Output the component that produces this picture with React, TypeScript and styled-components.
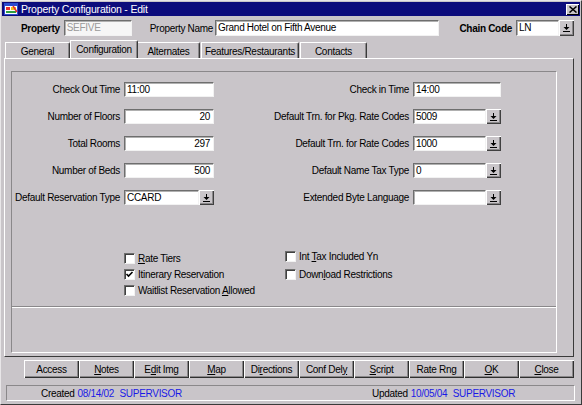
import React from 'react';
import styled, { createGlobalStyle } from 'styled-components';

const GlobalStyle = createGlobalStyle`
  html, body {
    margin: 0;
    padding: 0;
  }
  body {
    font-family: "Liberation Sans", Arial, sans-serif;
    font-size: 10px;
    letter-spacing: -0.3px;
    color: #000;
    background: #c9c5c9;
  }
`;

const BG = '#c9c5c9';

const Window = styled.div`
  width: 582px;
  height: 405px;
  box-sizing: border-box;
  background: ${BG};
  border: 1px solid;
  border-color: #e8e6e8 #3a3a3a #3a3a3a #e8e6e8;
  display: flex;
  flex-direction: column;
  overflow: hidden;
`;

const TitleBar = styled.div`
  height: 14px;
  margin: 1px 1px 0 1px;
  background: #0c0c7c;
  color: #fff;
  display: flex;
  align-items: center;
  padding-left: 2px;
  gap: 3px;
  font-size: 10.5px;
  letter-spacing: -0.2px;
`;

const TitleText = styled.span`
  flex: 1;
`;

const CloseBox = styled.div`
  width: 13px;
  height: 11px;
  margin-right: 1px;
  background: ${BG};
  box-shadow: inset 1px 1px 0 #fff, inset -1px -1px 0 #000;
  display: flex;
  align-items: center;
  justify-content: center;
`;

const HeaderRow = styled.div`
  height: 22px;
  margin-top: 1px;
  display: flex;
  align-items: center;
  padding: 0 7px 0 20px;
`;

const HeaderLabel = styled.span<{ $bold?: boolean; $gap?: number; $push?: boolean }>`
  font-weight: ${(p) => (p.$bold ? 700 : 400)};
  margin-right: ${(p) => p.$gap ?? 4}px;
  margin-left: ${(p) => (p.$push ? 'auto' : '0')};
  white-space: nowrap;
`;

const Input = styled.div<{ $w: number; $right?: boolean; $muted?: boolean; $h?: number }>`
  width: ${(p) => p.$w}px;
  height: ${(p) => p.$h ?? 15}px;
  box-sizing: border-box;
  background: ${(p) => (p.$muted ? '#f6f6f6' : '#fff')};
  color: ${(p) => (p.$muted ? '#9a9a9a' : '#000')};
  border: 1px solid;
  border-color: #6e6e6e #f2f2f2 #f2f2f2 #6e6e6e;
  box-shadow: inset 1px 1px 0 #b0b0b0;
  padding: 0 3px 0 2px;
  display: flex;
  align-items: center;
  justify-content: ${(p) => (p.$right ? 'flex-end' : 'flex-start')};
  line-height: 1;
  white-space: nowrap;
  overflow: hidden;
  flex-shrink: 0;
`;

const Combo = styled.div<{ $w: number }>`
  width: ${(p) => p.$w}px;
  display: flex;
  flex-shrink: 0;
`;

const ComboButton = styled.div<{ $h?: number }>`
  width: 15px;
  height: ${(p) => p.$h ?? 15}px;
  box-sizing: border-box;
  background: ${BG};
  box-shadow: inset 1px 1px 0 #fff, inset -1px -1px 0 #404040, inset -2px -2px 0 #8a888a;
  display: flex;
  align-items: center;
  justify-content: center;
  flex-shrink: 0;
`;

const Spacer = styled.div<{ $w: number }>`
  width: ${(p) => p.$w}px;
  flex-shrink: 0;
`;

const TabStrip = styled.div`
  height: 18px;
  margin-top: 1px;
  padding-left: 4px;
  display: flex;
  align-items: flex-end;
`;

const Tab = styled.div<{ $w: number; $active?: boolean }>`
  width: ${(p) => p.$w}px;
  height: ${(p) => (p.$active ? 18 : 16)}px;
  box-sizing: border-box;
  margin: ${(p) => (p.$active ? '0 -1px 0 -1px' : '0 1px 0 0')};
  position: relative;
  z-index: ${(p) => (p.$active ? 2 : 1)};
  background: ${BG};
  border-top: 1px solid #fff;
  border-left: 1px solid #fff;
  border-right: 1px solid #3a3a3a;
  box-shadow: inset -1px 0 0 #8a888a;
  border-top-right-radius: 2px;
  display: flex;
  align-items: center;
  justify-content: center;
  padding-top: 1px;
  padding-bottom: ${(p) => (p.$active ? 1 : 0)}px;
  white-space: nowrap;
`;

const TabPanel = styled.div`
  height: 299px;
  margin: 0 7px 0 3px;
  box-sizing: border-box;
  border: 1px solid;
  border-color: #fff #3a3a3a #3a3a3a #fff;
  padding: 12px 16px 3px 6px;
  display: flex;
`;

const Frame = styled.div`
  flex: 1;
  border: 1px solid;
  border-color: #8a888a #fff #fff #8a888a;
  display: flex;
  flex-direction: column;
`;

const FieldArea = styled.div`
  height: 235px;
  box-sizing: border-box;
  border-bottom: 1px solid #8a888a;
  box-shadow: 0 1px 0 #fff;
  padding-top: 10px;
  display: flex;
  flex-direction: column;
`;

const FieldGrid = styled.div`
  display: grid;
  grid-template-columns: 108px 90px 191px 88px;
  grid-auto-rows: 15px;
  column-gap: 4px;
  row-gap: 12px;
  align-items: center;
`;

const FieldLabel = styled.span`
  text-align: right;
  white-space: nowrap;
`;

const CheckGrid = styled.div`
  margin-top: 45px;
  padding-left: 112px;
  display: grid;
  grid-template-columns: 161px auto;
  grid-template-rows: repeat(3, 16px);
  align-items: center;
`;

const CheckRow = styled.label<{ $col: number; $row: number; $lift?: number }>`
  grid-column: ${(p) => p.$col};
  grid-row: ${(p) => p.$row};
  display: flex;
  align-items: center;
  gap: 3px;
  white-space: nowrap;
  position: relative;
  top: ${(p) => -(p.$lift ?? 0)}px;
`;

const CheckBox = styled.span`
  width: 11px;
  height: 11px;
  box-sizing: border-box;
  background: #fff;
  border: 1px solid;
  border-color: #6e6e6e #f2f2f2 #f2f2f2 #6e6e6e;
  box-shadow: inset 1px 1px 0 #404040;
  display: flex;
  align-items: center;
  justify-content: center;
`;

const Mn = styled.span`
  text-decoration: underline;
`;

const ButtonRow = styled.div`
  height: 18px;
  margin-top: 3px;
  padding-left: 23px;
  display: flex;
`;

const Button = styled.div`
  width: 55px;
  height: 18px;
  box-sizing: border-box;
  background: ${BG};
  box-shadow: inset 1px 1px 0 #fff, inset -1px -1px 0 #303030, inset -2px -2px 0 #8a888a;
  display: flex;
  align-items: center;
  justify-content: center;
  white-space: nowrap;
`;

const StatusBar = styled.div`
  height: 16px;
  margin: 7px 6px 0 5px;
  box-sizing: border-box;
  border: 1px solid;
  border-color: #8a888a #fff #fff #8a888a;
  display: grid;
  grid-template-columns: 331px auto;
  align-items: center;
  padding-left: 34px;
`;

const StatusItem = styled.div`
  display: flex;
  gap: 3px;
  align-items: baseline;
  white-space: nowrap;
`;

const Blue = styled.span`
  color: #1a1ae6;
  word-spacing: 3px;
`;

const DownArrow = () => (
  <svg width="7" height="8" viewBox="0 0 7 8">
    <rect x="3" y="0" width="1" height="3" fill="#000" />
    <polygon points="0.5,3 6.5,3 3.5,6" fill="#000" />
    <rect x="0" y="7" width="7" height="1" fill="#000" />
  </svg>
);

const Check = () => (
  <svg width="9" height="9" viewBox="0 0 9 9">
    <path d="M1.5 4 L3.5 6 L7.5 2" stroke="#000" strokeWidth="1.6" fill="none" />
  </svg>
);

const AppIcon = () => (
  <svg width="14" height="12" viewBox="0 0 14 12">
    <rect x="0.5" y="0.5" width="13" height="11" fill="#fff" stroke="#2a4bd0" />
    <rect x="1" y="1" width="12" height="2" fill="#2a4bd0" />
    <rect x="2" y="4" width="4" height="3" fill="#e83030" />
    <rect x="7" y="4" width="5" height="3" fill="#f0c020" />
    <rect x="2" y="8" width="10" height="2" fill="#30a040" />
    <path d="M9 3 L13 9" stroke="#e83030" strokeWidth="1.5" />
  </svg>
);

const CloseIcon = () => (
  <svg width="8" height="7" viewBox="0 0 8 7">
    <path d="M0.5 0.5 L7.5 6.5 M7.5 0.5 L0.5 6.5" stroke="#000" strokeWidth="1.5" />
  </svg>
);

type Field = { label: string; value: string; right?: boolean; combo?: boolean };

const leftFields: Field[] = [
  { label: 'Check Out Time', value: '11:00' },
  { label: 'Number of Floors', value: '20', right: true },
  { label: 'Total Rooms', value: '297', right: true },
  { label: 'Number of Beds', value: '500', right: true },
  { label: 'Default Reservation Type', value: 'CCARD', combo: true },
];

const rightFields: Field[] = [
  { label: 'Check in Time', value: '14:00' },
  { label: 'Default Trn. for Pkg. Rate Codes', value: '5009', combo: true },
  { label: 'Default Trn. for Rate Codes', value: '1000', combo: true },
  { label: 'Default Name Tax Type', value: '0', combo: true },
  { label: 'Extended Byte Language', value: '', combo: true },
];

const FieldInput = ({ f, w }: { f: Field; w: number }) =>
  f.combo ? (
    <Combo $w={w}>
      <Input $w={w - 15}>{f.value}</Input>
      <ComboButton>
        <DownArrow />
      </ComboButton>
    </Combo>
  ) : (
    <Input $w={w} $right={f.right}>
      {f.value}
    </Input>
  );

const buttons: React.ReactNode[] = [
  'Access',
  <><Mn>N</Mn>otes</>,
  <>E<Mn>d</Mn>it Img</>,
  <><Mn>M</Mn>ap</>,
  <>Di<Mn>r</Mn>ections</>,
  <>Conf Del<Mn>y</Mn></>,
  <><Mn>S</Mn>cript</>,
  <>Rate Rn<Mn>g</Mn></>,
  <><Mn>O</Mn>K</>,
  <><Mn>C</Mn>lose</>,
];

const tabs = [
  { name: 'General', w: 65 },
  { name: 'Configuration', w: 68, active: true },
  { name: 'Alternates', w: 63 },
  { name: 'Features/Restaurants', w: 98 },
  { name: 'Contacts', w: 67 },
];

export default function App() {
  return (
    <>
      <GlobalStyle />
      <Window>
        <TitleBar>
          <AppIcon />
          <TitleText>Property Configuration - Edit</TitleText>
          <CloseBox>
            <CloseIcon />
          </CloseBox>
        </TitleBar>

        <HeaderRow>
          <HeaderLabel $bold>Property</HeaderLabel>
          <Input $w={68} $h={16} $muted>
            SEFIVE
          </Input>
          <Spacer $w={18} />
          <HeaderLabel $gap={2}>Property Name</HeaderLabel>
          <Input $w={224} $h={16}>
            Grand Hotel on Fifth Avenue
          </Input>
          <HeaderLabel $bold $push>
            Chain Code
          </HeaderLabel>
          <Combo $w={58}>
            <Input $w={43} $h={16}>
              LN
            </Input>
            <ComboButton $h={16}>
              <DownArrow />
            </ComboButton>
          </Combo>
        </HeaderRow>

        <TabStrip>
          {tabs.map((t) => (
            <Tab key={t.name} $w={t.w} $active={t.active}>
              {t.name}
            </Tab>
          ))}
        </TabStrip>

        <TabPanel>
          <Frame>
            <FieldArea>
              <FieldGrid>
                {leftFields.map((lf, i) => {
                  const rf = rightFields[i];
                  return (
                    <React.Fragment key={lf.label}>
                      <FieldLabel>{lf.label}</FieldLabel>
                      <FieldInput f={lf} w={90} />
                      <FieldLabel>{rf.label}</FieldLabel>
                      <FieldInput f={rf} w={88} />
                    </React.Fragment>
                  );
                })}
              </FieldGrid>

              <CheckGrid>
                <CheckRow $col={1} $row={1}>
                  <CheckBox />
                  <span>
                    <Mn>R</Mn>ate Tiers
                  </span>
                </CheckRow>
                <CheckRow $col={1} $row={2}>
                  <CheckBox>
                    <Check />
                  </CheckBox>
                  <span>Itinerary Reservation</span>
                </CheckRow>
                <CheckRow $col={1} $row={3}>
                  <CheckBox />
                  <span>
                    Waitlist Reservation <Mn>A</Mn>llowed
                  </span>
                </CheckRow>
                <CheckRow $col={2} $row={1} $lift={2}>
                  <CheckBox />
                  <span>
                    Int <Mn>T</Mn>ax Included Yn
                  </span>
                </CheckRow>
                <CheckRow $col={2} $row={2}>
                  <CheckBox />
                  <span>
                    Down<Mn>l</Mn>oad Restrictions
                  </span>
                </CheckRow>
              </CheckGrid>
            </FieldArea>
          </Frame>
        </TabPanel>

        <ButtonRow>
          {buttons.map((b, i) => (
            <Button key={i}>{b}</Button>
          ))}
        </ButtonRow>

        <StatusBar>
          <StatusItem>
            <span>Created</span>
            <Blue>08/14/02 SUPERVISOR</Blue>
          </StatusItem>
          <StatusItem>
            <span>Updated</span>
            <Blue>10/05/04 SUPERVISOR</Blue>
          </StatusItem>
        </StatusBar>
      </Window>
    </>
  );
}
